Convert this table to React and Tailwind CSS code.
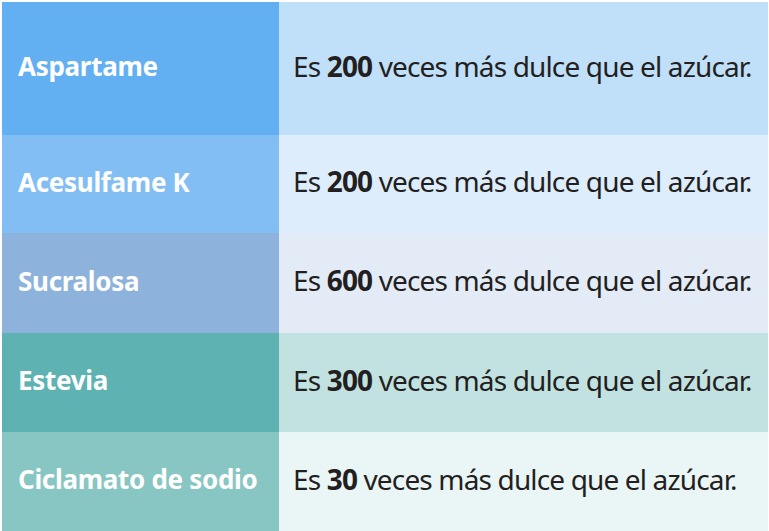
export default function App() {
  const rows = [
    { name: "Aspartame", n: "200", h: "h-[133px]", l: "bg-[#62aff2]", r: "bg-[#c0dff8]" },
    { name: "Acesulfame K", n: "200", h: "h-[98px]", l: "bg-[#82bef4]", r: "bg-[#ddedfb]" },
    { name: "Sucralosa", n: "600", h: "h-[100px]", l: "bg-[#8db2dc]", r: "bg-[#e2ebf6]" },
    { name: "Estevia", n: "300", h: "h-[99px]", l: "bg-[#5eb3b2]", r: "bg-[#c2e2e1]" },
    { name: "Ciclamato de sodio", n: "30", h: "h-[99px]", l: "bg-[#88c6c3]", r: "bg-[#eaf6f6]" },
  ];
  return (
    <div className="w-[769px] h-[531px] bg-white pt-[2px] pl-[2px] pr-[1px] font-['Noto_Sans',sans-serif]">
      {rows.map((row) => (
        <div key={row.name} className={`flex ${row.h}`}>
          <div className={`w-[277px] ${row.l} flex items-center pl-4 pb-[4px] text-white font-bold text-[26px] tracking-[-0.3px]`}>
            {row.name}
          </div>
          <div className={`flex-1 ${row.r} flex items-center pl-[14px] pb-[6px] text-[#231f20] text-[28px] tracking-[-0.85px]`}>
            <span>
              Es <b className="font-bold">{row.n}</b> veces más dulce que el azúcar.
            </span>
          </div>
        </div>
      ))}
    </div>
  );
}
